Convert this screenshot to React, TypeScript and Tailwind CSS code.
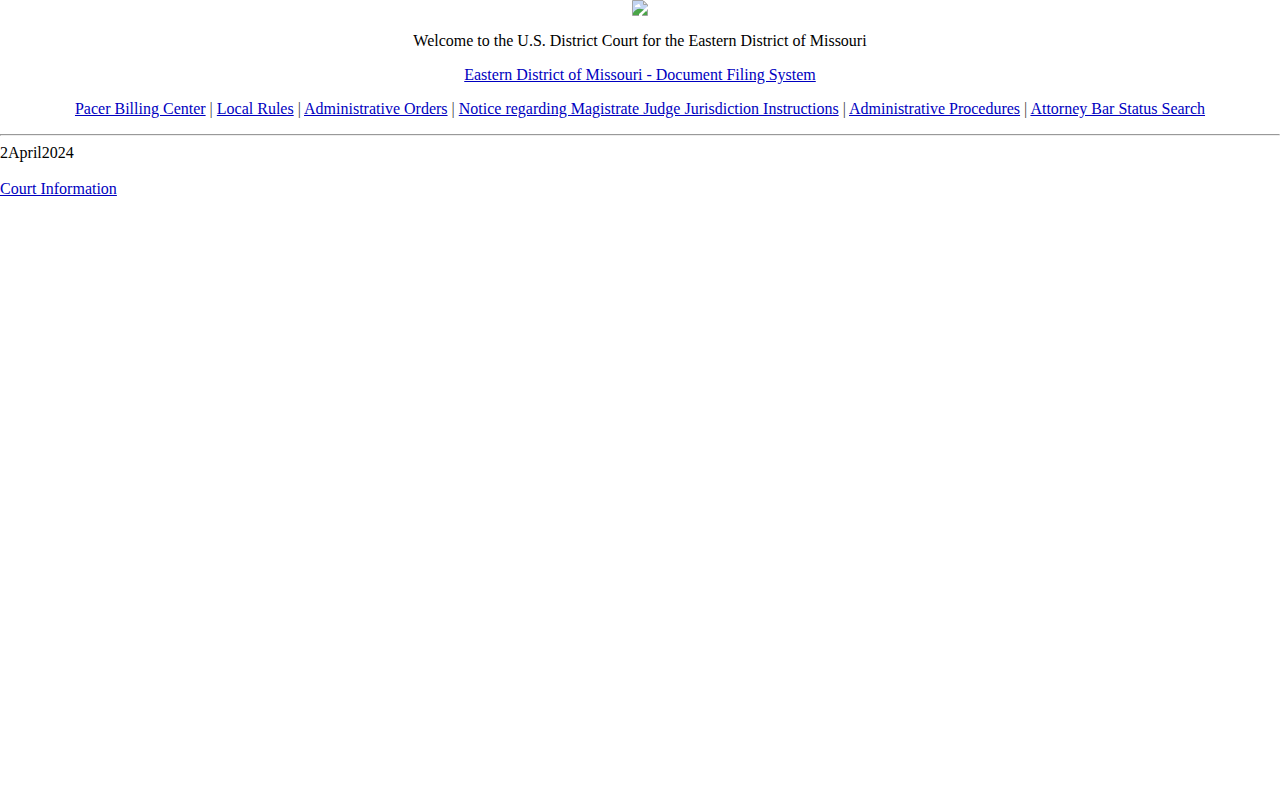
const courtLinks = [
  'Pacer Billing Center',
  'Local Rules',
  'Administrative Orders',
  'Notice regarding Magistrate Judge Jurisdiction Instructions',
  'Administrative Procedures',
  'Attorney Bar Status Search',
]

function SealPlaceholder() {
  return (
    <svg width="16" height="16" viewBox="0 0 16 16" role="img" aria-label="Court seal">
      {/* page with sky */}
      <path d="M0.5 0.5H11L15.5 5V15.5H0.5Z" fill="#c3d5f3" stroke="#a3a3a3" />
      {/* cloud */}
      <path d="M3 7V6L4 5H5L6 4H7L8 5V6L9 7Z" fill="#fff" />
      {/* hill */}
      <path d="M1 15V13C3 10 6 8 9 9C12 9 14 11 15 12V15Z" fill="#4ba548" />
      {/* tear */}
      <path d="M16 6V9L10 15V16H7V14Z" fill="#fff" />
      {/* folded corner */}
      <path d="M11.5 1V4.5H15Z" fill="#f2f2f2" stroke="#a3a3a3" />
    </svg>
  )
}

function TextLink({ label }: { label: string }) {
  return (
    <a href="#" className="text-[#0000c0] underline">
      {label}
    </a>
  )
}

export default function App() {
  return (
    <div className="bg-white text-black text-base leading-[18px] font-['Liberation_Serif',serif]">
      <header className="flex flex-col items-center gap-4 text-center">
        <SealPlaceholder />
        <p>Welcome to the U.S. District Court for the Eastern District of Missouri</p>
        <p>
          <TextLink label="Eastern District of Missouri - Document Filing System" />
        </p>
        <nav>
          {courtLinks.map((label, i) => (
            <span key={label}>
              {i > 0 && <span className="text-[#444444]"> | </span>}
              <TextLink label={label} />
            </span>
          ))}
        </nav>
      </header>

      <hr className="mt-4 mb-2 border border-t-[#999999] border-l-[#999999] border-r-[#ededed] border-b-[#ededed]" />

      <main>
        <p>2April2024</p>
        <br />
        <p>
          <TextLink label="Court Information" />
        </p>
      </main>
    </div>
  )
}
